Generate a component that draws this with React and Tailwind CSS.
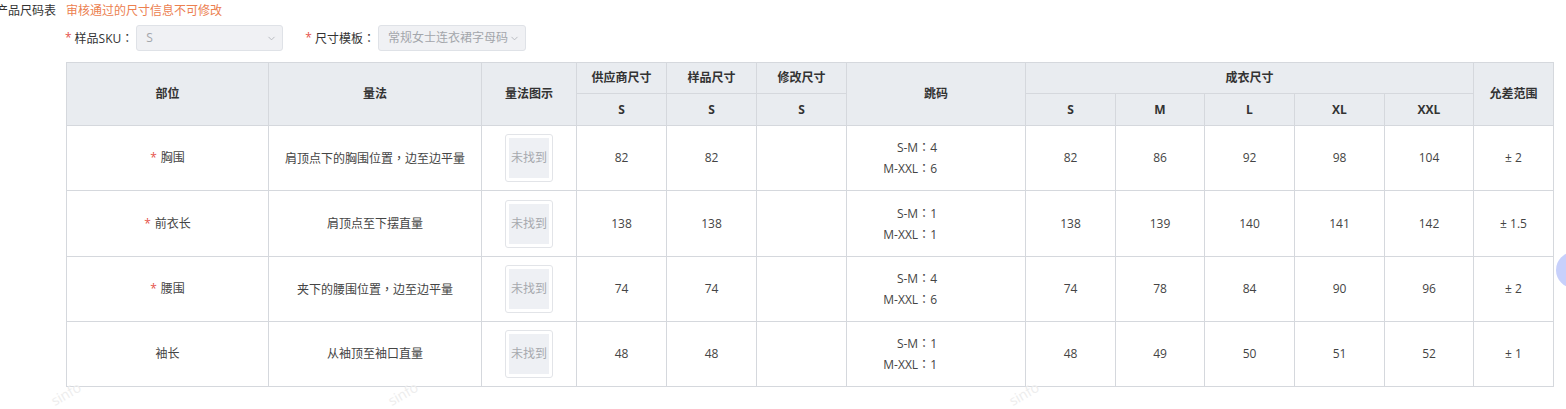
import React from 'react';
import { ChevronDown } from 'lucide-react';

const sizes = ['S', 'M', 'L', 'XL', 'XXL'];

const rows = [
    { part: '胸围', required: true, method: '肩顶点下的胸围位置，边至边平量', supplier: '82', sample: '82', jump: ['S-M：4', 'M-XXL：6'], values: ['82', '86', '92', '98', '104'], tol: '± 2' },
    { part: '前衣长', required: true, method: '肩顶点至下摆直量', supplier: '138', sample: '138', jump: ['S-M：1', 'M-XXL：1'], values: ['138', '139', '140', '141', '142'], tol: '± 1.5' },
    { part: '腰围', required: true, method: '夹下的腰围位置，边至边平量', supplier: '74', sample: '74', jump: ['S-M：4', 'M-XXL：6'], values: ['74', '78', '84', '90', '96'], tol: '± 2' },
    { part: '袖长', required: false, method: '从袖顶至袖口直量', supplier: '48', sample: '48', jump: ['S-M：1', 'M-XXL：1'], values: ['48', '49', '50', '51', '52'], tol: '± 1' },
];

const colWidths = [202, 213, 95, 90, 90, 90, 179, 90, 89, 90, 90, 89, 80];
const rowHeights = ['h-[65px]', 'h-[66px]', 'h-[65px]', 'h-[65px]'];

const th = 'border border-[#d5d8dd] bg-[#e9ecf0] text-[#333] font-bold text-center align-middle';
const td = 'border border-[#d5d8dd] text-[#444] text-center align-middle';

// full-width punctuation sits centred in the reference, TC font does that
const Punct = ({ text }) => (
    <>
        {text.split(/([：，])/).map((part, i) =>
            part === '：' || part === '，'
                ? <span key={i} style={{ fontFamily: '"Noto Sans CJK TC", sans-serif' }}>{part}</span>
                : <React.Fragment key={i}>{part}</React.Fragment>
        )}
    </>
);

const Select = ({ value, width }) => (
    <div className={`flex items-center justify-between shrink-0 whitespace-nowrap h-[26px] ${width} pl-[9px] pr-[5px] bg-[#f0f1f4] border border-[#dfe2e7] rounded-[3px] text-[#a3a6ab]`}>
        <span>{value}</span>
        <ChevronDown className="w-[11px] h-[11px] shrink-0 text-[#b4b7bc]" strokeWidth={2} />
    </div>
);

const App = () => {
    return (
        <div
            className="relative w-[1566px] h-[409px] overflow-hidden bg-white text-[12px] leading-none text-[#333]"
            style={{ fontFamily: '"Open Sans", "Noto Sans CJK SC", sans-serif' }}
        >
            {/* Title */}
            <div className="flex items-center h-[22px] -ml-[4px] gap-[10px]">
                <span className="text-[#333]">产品尺码表</span>
                <span className="text-[#ec8050]">审核通过的尺寸信息不可修改</span>
            </div>

            {/* Filters */}
            <div className="flex items-center pl-[65px] mt-[3px] h-[26px] whitespace-nowrap">
                <span className="text-[#e5534b] mr-[3px]">*</span>
                <span className="text-[#333]"><Punct text="样品SKU：" /></span>
                <Select value="S" width="w-[147px] ml-[3px]" />
                <span className="text-[#e5534b] ml-[22px] mr-[3px]">*</span>
                <span className="text-[#333]"><Punct text="尺寸模板：" /></span>
                <Select value="常规女士连衣裙字母码" width="w-[148px] ml-[3px]" />
            </div>

            {/* Table */}
            <div className="pl-[66px] mt-[11px]">
                <table className="table-fixed border-collapse w-[1487px]">
                    <colgroup>
                        {colWidths.map((w, i) => (
                            <col key={i} style={{ width: w }} />
                        ))}
                    </colgroup>
                    <thead>
                        <tr className="h-[31px]">
                            <th rowSpan={2} className={th}>部位</th>
                            <th rowSpan={2} className={th}>量法</th>
                            <th rowSpan={2} className={th}>量法图示</th>
                            <th className={th}>供应商尺寸</th>
                            <th className={th}>样品尺寸</th>
                            <th className={th}>修改尺寸</th>
                            <th rowSpan={2} className={th}>跳码</th>
                            <th colSpan={5} className={th}>成衣尺寸</th>
                            <th rowSpan={2} className={th}>允差范围</th>
                        </tr>
                        <tr className="h-[32px]">
                            <th className={th}>S</th>
                            <th className={th}>S</th>
                            <th className={th}>S</th>
                            {sizes.map(s => (
                                <th key={s} className={th}>{s}</th>
                            ))}
                        </tr>
                    </thead>
                    <tbody>
                        {rows.map((r, i) => (
                            <tr key={r.part} className={rowHeights[i]}>
                                <td className={td}>
                                    {r.required && <span className="text-[#e5534b] mr-[4px]">*</span>}
                                    {r.part}
                                </td>
                                <td className={td}><Punct text={r.method} /></td>
                                <td className={td}>
                                    <div className="mx-auto w-[48px] h-[48px] p-[3px] bg-white border border-[#e2e4e8] rounded-[3px]">
                                        <div className="flex items-center justify-center w-full h-full bg-[#eef0f4] text-[#a6a9ae]">未找到</div>
                                    </div>
                                </td>
                                <td className={td}>{r.supplier}</td>
                                <td className={td}>{r.sample}</td>
                                <td className={td}></td>
                                <td className={td}>
                                    <div className="flex flex-col items-end gap-[8px] pr-[88px]">
                                        {r.jump.map(j => (
                                            <span key={j}><Punct text={j} /></span>
                                        ))}
                                    </div>
                                </td>
                                {r.values.map((v, k) => (
                                    <td key={k} className={td}>{v}</td>
                                ))}
                                <td className={td}>{r.tol}</td>
                            </tr>
                        ))}
                    </tbody>
                </table>
            </div>

            {/* Watermarks */}
            <span className="absolute left-[50px] top-[387px] -rotate-[30deg] text-[14px] text-[#ededed]">sinfo</span>
            <span className="absolute left-[387px] top-[387px] -rotate-[30deg] text-[14px] text-[#ededed]">sinfo</span>
            <span className="absolute left-[1008px] top-[387px] -rotate-[30deg] text-[14px] text-[#ededed]">sinfo</span>

            {/* Floating helper button */}
            <div className="absolute left-[1556px] top-[252px] w-[36px] h-[36px] rounded-full bg-[#c7d0fb]" />
        </div>
    );
};

export default App;
